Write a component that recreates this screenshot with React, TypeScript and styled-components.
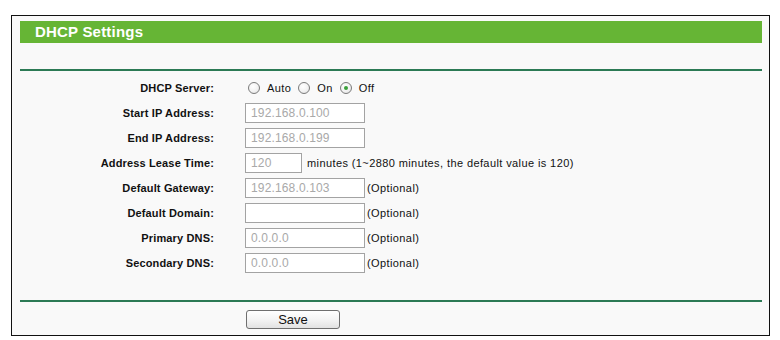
import React from "react";
import styled, { createGlobalStyle } from "styled-components";

const Global = createGlobalStyle`
  html, body { margin: 0; padding: 0; background: #ffffff; }
  body { font-family: "Liberation Sans", Arial, sans-serif; }
`;

const Panel = styled.div`
  box-sizing: border-box;
  margin: 15px 0 0 11px;
  width: 759px;
  height: 321px;
  border: 1px solid #111;
  background: #f9f9f9;
  padding: 5px 7px 0 8px;
  display: flex;
  flex-direction: column;
`;

const TitleBar = styled.div`
  height: 22px;
  background: #66b535;
  color: #fff;
  font-weight: bold;
  font-size: 15px;
  letter-spacing: 0.2px;
  line-height: 22px;
  padding-left: 15px;
`;

const Divider = styled.div<{ $top: number }>`
  height: 2px;
  background: #2c7a55;
  margin-top: ${(p) => p.$top}px;
`;

const Form = styled.div`
  margin-top: 4px;
  display: grid;
  grid-template-columns: 194px 1fr;
  column-gap: 31px;
  grid-auto-rows: 25px;
  align-items: center;
`;

const Label = styled.div`
  text-align: right;
  font-weight: bold;
  font-size: 11px;
  letter-spacing: 0.15px;
  color: #111;
`;

const Value = styled.div`
  display: flex;
  align-items: center;
  font-size: 11px;
  letter-spacing: 0.4px;
  color: #111;
`;

const Field = styled.div<{ $w: number }>`
  box-sizing: border-box;
  width: ${(p) => p.$w}px;
  height: 20px;
  border: 1px solid #a3a3a3;
  background: #fff;
  color: #a9a9a9;
  font-size: 12px;
  letter-spacing: 0.15px;
  line-height: 18px;
  padding-left: 5px;
`;

const Note = styled.span<{ $gap: number }>`
  margin-left: ${(p) => p.$gap}px;
  font-size: 11px;
`;

const RadioOpt = styled.label`
  display: inline-flex;
  align-items: center;
  gap: 7px;
  margin-right: 7px;
  font-size: 11px;
  margin-left: 3px;
  & + & { margin-left: 0; }
`;

const Dot = styled.span<{ $checked?: boolean }>`
  box-sizing: border-box;
  width: 12px;
  height: 12px;
  border-radius: 50%;
  border: 1px solid #7b7b7b;
  background: radial-gradient(circle at 40% 35%, #ffffff 0%, #f2f2f2 55%, #dcdcdc 100%);
  display: inline-flex;
  align-items: center;
  justify-content: center;
  &::after {
    content: "";
    width: 4px;
    height: 4px;
    border-radius: 50%;
    background: ${(p) => (p.$checked ? "#3aa03a" : "transparent")};
  }
`;

const Footer = styled.div`
  display: grid;
  grid-template-columns: 194px 1fr;
  column-gap: 32px;
  margin-top: 8px;
`;

const SaveButton = styled.button`
  grid-column: 2;
  box-sizing: border-box;
  width: 94px;
  height: 19px;
  border: 1px solid #6f6f6f;
  border-radius: 3px;
  background: linear-gradient(#ffffff, #f4f4f4 50%, #e2e2e2);
  font-family: "Liberation Sans", Arial, sans-serif;
  font-size: 13px;
  line-height: 15px;
  padding: 0;
  color: #111;
`;

export default function App() {
  return (
    <>
      <Global />
      <Panel>
        <TitleBar>DHCP Settings</TitleBar>
        <Divider $top={26} />
        <Form>
          <Label>DHCP Server:</Label>
          <Value>
            <RadioOpt><Dot />Auto</RadioOpt>
            <RadioOpt><Dot />On</RadioOpt>
            <RadioOpt><Dot $checked />Off</RadioOpt>
          </Value>
          <Label>Start IP Address:</Label>
          <Value><Field $w={120}>192.168.0.100</Field></Value>
          <Label>End IP Address:</Label>
          <Value><Field $w={120}>192.168.0.199</Field></Value>
          <Label>Address Lease Time:</Label>
          <Value>
            <Field $w={57}>120</Field>
            <Note $gap={5}>minutes (1~2880 minutes, the default value is 120)</Note>
          </Value>
          <Label>Default Gateway:</Label>
          <Value><Field $w={120}>192.168.0.103</Field><Note $gap={2}>(Optional)</Note></Value>
          <Label>Default Domain:</Label>
          <Value><Field $w={120} /><Note $gap={2}>(Optional)</Note></Value>
          <Label>Primary DNS:</Label>
          <Value><Field $w={120}>0.0.0.0</Field><Note $gap={2}>(Optional)</Note></Value>
          <Label>Secondary DNS:</Label>
          <Value><Field $w={120}>0.0.0.0</Field><Note $gap={2}>(Optional)</Note></Value>
        </Form>
        <Divider $top={25} />
        <Footer>
          <SaveButton>Save</SaveButton>
        </Footer>
      </Panel>
    </>
  );
}
